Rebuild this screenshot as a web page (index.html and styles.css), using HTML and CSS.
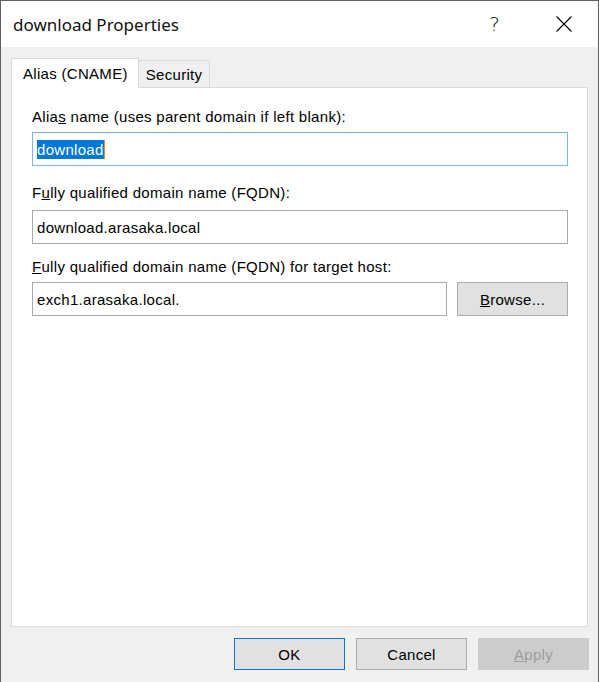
FILE: index.html
```html
<!DOCTYPE html>
<html lang="en">
<head>
    <meta charset="UTF-8">
    <meta name="viewport" content="width=device-width, initial-scale=1.0">
    <title>download Properties</title>
    <link rel="stylesheet" href="styles.css">
</head>
<body>
    <div class="window">
        <!-- Title bar -->
        <div class="titlebar">
            <span class="title">download Properties</span>
            <div class="caption-buttons">
                <span class="caption-btn help">?</span>
                <span class="caption-btn close">
                    <svg width="16" height="16" viewBox="0 0 16 16">
                        <path d="M0.5 0.5 L15.5 15.5 M15.5 0.5 L0.5 15.5" stroke="#000" stroke-width="1.1" fill="none"/>
                    </svg>
                </span>
            </div>
        </div>

        <div class="content">
            <!-- Tabs -->
            <div class="tabs">
                <div class="tab active">Alias (CNAME)</div>
                <div class="tab">Security</div>
            </div>

            <!-- Tab page -->
            <div class="panel">
                <div class="field">
                    <div class="label">Alia<u>s</u> name (uses parent domain if left blank):</div>
                    <div class="textbox focused"><span class="selected">download</span><span class="caret"></span></div>
                </div>

                <div class="field fqdn">
                    <div class="label">F<u>u</u>lly qualified domain name (FQDN):</div>
                    <div class="textbox">download.arasaka.local</div>
                </div>

                <div class="field target">
                    <div class="label"><u>F</u>ully qualified domain name (FQDN) for target host:</div>
                    <div class="row">
                        <div class="textbox grow">exch1.arasaka.local.</div>
                        <button class="btn"><u>B</u>rowse...</button>
                    </div>
                </div>
            </div>

            <!-- Dialog buttons -->
            <div class="footer">
                <button class="btn default">OK</button>
                <button class="btn">Cancel</button>
                <button class="btn disabled"><u>A</u>pply</button>
            </div>
        </div>
    </div>
</body>
</html>
```

FILE: styles.css
```css
* {
    margin: 0;
    padding: 0;
    box-sizing: border-box;
}

html, body {
    width: 599px;
    height: 682px;
    overflow: hidden;
    background: #f0f0f0;
    font-family: "Liberation Sans", Arial, sans-serif;
    font-size: 15px;
    letter-spacing: 0.3px;
    color: #000;
}

/* Window frame */
.window {
    display: flex;
    flex-direction: column;
    height: 682px;
    border: 1px solid #5f5f5f;
    border-bottom: none;
    background: #f0f0f0;
}

.titlebar {
    display: flex;
    align-items: center;
    height: 46px;
    padding-left: 12px;
    background: #fff;
}

.title {
    font-family: "Noto Sans", "Open Sans", sans-serif;
    font-size: 17px;
    letter-spacing: 0;
    color: #111;
}

.caption-buttons {
    display: flex;
    margin-left: auto;
    height: 100%;
}

.caption-btn {
    display: flex;
    align-items: center;
    justify-content: center;
    width: 69px;
    height: 100%;
}

.help {
    font-family: "DejaVu Sans", sans-serif;
    font-weight: 200;
    font-size: 20px;
    letter-spacing: 0;
}

/* Content area */
.content {
    display: flex;
    flex-direction: column;
    flex: 1;
    padding: 11px 10px 0 10px;
}

.tabs {
    display: flex;
    align-items: flex-end;
    height: 29px;
    position: relative;
    z-index: 1;
}

.tab {
    display: flex;
    align-items: center;
    height: 27px;
    padding: 0 7px;
    border: 1px solid #d9d9d9;
    border-bottom: none;
    border-left: none;
    background: #f0f0f0;
}

.tab.active {
    height: 30px;
    margin-bottom: -1px;
    padding: 0 10px 0 11px;
    border-left: 1px solid #d9d9d9;
    background: #fff;
}

.panel {
    flex: 1;
    padding: 21px 19px 0 20px;
    background: #fff;
    border: 1px solid #d9d9d9;
}

.label {
    line-height: 16px;
    margin-bottom: 7px;
}

/* dialog-unit spacing isn't quite even between the rows */
.fqdn {
    margin-top: 19px;
}

.fqdn .label {
    margin-bottom: 9px;
}

.target {
    margin-top: 15px;
}

.textbox {
    display: flex;
    align-items: center;
    height: 34px;
    padding-left: 4px;
    border: 1px solid #a9a9a9;
    background: #fff;
    white-space: nowrap;
}

.textbox.focused {
    border-color: #7eb4ea;
}

.selected {
    display: inline-block;
    line-height: 19px;
    background: #0078d7;
    color: #fff;
}

.caret {
    display: inline-block;
    width: 1px;
    height: 19px;
    background: #e8901e;
}

.row {
    display: flex;
    gap: 10px;
}

.grow {
    flex: 1;
}

/* Buttons */
.btn {
    width: 111px;
    height: 34px;
    font-family: inherit;
    font-size: 15px;
    letter-spacing: 0.3px;
    color: #000;
    background: #e1e1e1;
    border: 1px solid #adadad;
}

.footer {
    display: flex;
    justify-content: flex-end;
    gap: 11px;
    padding: 11px 0 12px;
    margin-right: -1px;
}

.footer .btn {
    height: 32px;
}

.btn.default {
    border-color: #0078d7;
}

.btn.disabled {
    background: #cccccc;
    border-color: #cccccc;
    color: #9c9c9c;
}
```
